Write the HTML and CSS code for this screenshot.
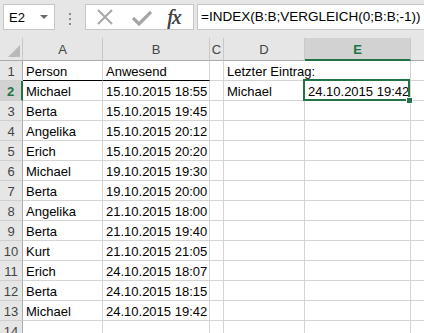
FILE: index.html
```html
<!DOCTYPE html>
<html lang="de">
<head>
    <meta charset="UTF-8">
    <title>Letzter Eintrag</title>
    <link rel="stylesheet" href="styles.css">
</head>
<body>
    <div class="formula-bar">
        <div class="name-box"><span>E2</span><span class="caret"></span></div>
        <div class="grip"><i></i><i></i><i></i></div>
        <div class="fx-buttons">
            <svg class="btn-x" width="18" height="18" viewBox="0 0 18 18"><path d="M2 2 L16 16 M16 2 L2 16" stroke="#a6a6a6" stroke-width="2" fill="none"/></svg>
            <svg class="btn-ok" width="20" height="16" viewBox="0 0 20 16"><path d="M1 8 L7 14 L19 2" stroke="#a6a6a6" stroke-width="3.2" fill="none"/></svg>
            <span class="fx">fx</span>
        </div>
        <div class="formula-input">=INDEX(B:B;VERGLEICH(0;B:B;-1))</div>
    </div>

    <table class="sheet">
        <colgroup>
            <col style="width:23px">
            <col style="width:80px">
            <col style="width:107px">
            <col style="width:14px">
            <col style="width:81px">
            <col style="width:106px">
            <col style="width:40px">
        </colgroup>
        <thead>
            <tr>
                <th class="corner"><span class="tri"></span></th>
                <th>A</th><th>B</th><th>C</th><th>D</th><th class="active">E</th><th></th>
            </tr>
        </thead>
        <tbody>
            <tr><th>1</th><td class="head">Person</td><td class="head">Anwesend</td><td></td><td class="spill">Letzter Eintrag:</td><td></td><td></td></tr>
            <tr><th class="active">2</th><td>Michael</td><td class="num">15.10.2015 18:55</td><td></td><td>Michael</td><td class="num sel">24.10.2015 19:42</td><td></td></tr>
            <tr><th>3</th><td>Berta</td><td class="num">15.10.2015 19:45</td><td></td><td></td><td></td><td></td></tr>
            <tr><th>4</th><td>Angelika</td><td class="num">15.10.2015 20:12</td><td></td><td></td><td></td><td></td></tr>
            <tr><th>5</th><td>Erich</td><td class="num">15.10.2015 20:20</td><td></td><td></td><td></td><td></td></tr>
            <tr><th>6</th><td>Michael</td><td class="num">19.10.2015 19:30</td><td></td><td></td><td></td><td></td></tr>
            <tr><th>7</th><td>Berta</td><td class="num">19.10.2015 20:00</td><td></td><td></td><td></td><td></td></tr>
            <tr><th>8</th><td>Angelika</td><td class="num">21.10.2015 18:00</td><td></td><td></td><td></td><td></td></tr>
            <tr><th>9</th><td>Berta</td><td class="num">21.10.2015 19:40</td><td></td><td></td><td></td><td></td></tr>
            <tr><th>10</th><td>Kurt</td><td class="num">21.10.2015 21:05</td><td></td><td></td><td></td><td></td></tr>
            <tr><th>11</th><td>Erich</td><td class="num">24.10.2015 18:07</td><td></td><td></td><td></td><td></td></tr>
            <tr><th>12</th><td>Berta</td><td class="num">24.10.2015 18:15</td><td></td><td></td><td></td><td></td></tr>
            <tr><th>13</th><td>Michael</td><td class="num">24.10.2015 19:42</td><td></td><td></td><td></td><td></td></tr>
            <tr><th>14</th><td></td><td></td><td></td><td></td><td></td><td></td></tr>
        </tbody>
    </table>
</body>
</html>
```

FILE: styles.css
```css
body {
    margin: 0;
    width: 424px;
    height: 333px;
    overflow: hidden;
    background: #fff;
    font-family: "Liberation Sans", Arial, sans-serif;
    font-size: 13px;
    color: #000;
}

/* formula bar */
.formula-bar {
    display: flex;
    align-items: flex-start;
    height: 38px;
    padding: 4px 0 0 3px;
    box-sizing: border-box;
    background: #e6e6e6;
}
.name-box {
    width: 52px;
    height: 26px;
    box-sizing: border-box;
    background: #fff;
    border: 1px solid #c6c6c6;
    display: flex;
    align-items: center;
    justify-content: space-between;
    padding: 0 6px 0 5px;
}
.caret {
    width: 0;
    height: 0;
    border-left: 4px solid transparent;
    border-right: 4px solid transparent;
    border-top: 4px solid #6a6a6a;
}
.grip {
    display: flex;
    flex-direction: column;
    gap: 3px;
    margin: 9px 0 0 14px;
}
.grip i { display: block; width: 2px; height: 2px; background: #8a8a8a; }
.fx-buttons {
    margin-left: 14px;
    width: 109px;
    height: 26px;
    box-sizing: border-box;
    background: #fff;
    border: 1px solid #c6c6c6;
    display: flex;
    align-items: center;
    padding-left: 10px;
}
.btn-x { margin-right: 18px; }
.btn-ok { margin-right: 15px; margin-top: 2px; }
.fx {
    font-family: "Liberation Serif", "Times New Roman", serif;
    font-style: italic;
    font-size: 21px;
    color: #444;
    letter-spacing: -1px;
    text-shadow: 0.4px 0 0 #444;
}
.formula-input {
    margin-left: 3px;
    flex: 1;
    height: 26px;
    box-sizing: border-box;
    background: #fff;
    border: 1px solid #c6c6c6;
    border-right: none;
    padding: 0 0 0 3px;
    line-height: 24px;
    font-size: 13.5px;
    white-space: nowrap;
    overflow: hidden;
}

/* grid */
.sheet {
    border-collapse: separate;
    border-spacing: 0;
    table-layout: fixed;
    width: 451px;
}
.sheet th, .sheet td {
    box-sizing: border-box;
    height: 20px;
    padding: 0 3px 1px 3px;
    border-right: 1px solid #d4d4d4;
    border-bottom: 1px solid #d4d4d4;
    white-space: nowrap;
    overflow: hidden;
    vertical-align: bottom;
    line-height: 15px;
}
.sheet thead th {
    height: 23px;
    background: #e6e6e6;
    color: #444;
    font-weight: normal;
    text-align: center;
    vertical-align: middle;
    border-right-color: #c8c8c8;
    border-bottom-color: #ababab;
    padding: 1px 0 0 0;
}
.sheet tbody th {
    background: #e6e6e6;
    color: #444;
    font-weight: normal;
    text-align: center;
    padding: 0 0 1px 0;
    border-right-color: #ababab;
    border-bottom-color: #cfcfcf;
}
.sheet thead th.corner {
    text-align: right;
    vertical-align: bottom;
    padding: 0 2px 3px 0;
}
.tri {
    display: inline-block;
    width: 0;
    height: 0;
    border-left: 12px solid transparent;
    border-bottom: 12px solid #b9b9b9;
    vertical-align: bottom;
}
.sheet thead th.active {
    background: #d2d2d2;
    color: #217346;
    font-weight: bold;
    border-bottom: 2px solid #217346;
}
.sheet tbody th.active {
    background: #d2d2d2;
    color: #217346;
    font-weight: bold;
    border-right: 2px solid #217346;
}
.sheet td.head { border-bottom-color: #000; }
.sheet td.spill { overflow: visible; border-right-color: transparent; }
.sheet td.num { text-align: right; padding-right: 3px; }
.sheet td.sel { position: relative; overflow: visible; }
.sheet td.sel::before {
    content: "";
    position: absolute;
    left: -2px;
    top: -2px;
    right: 0;
    bottom: -1px;
    border: 2px solid #217346;
}
.sheet td.sel::after {
    content: "";
    position: absolute;
    right: -3px;
    bottom: -4px;
    width: 5px;
    height: 5px;
    background: #217346;
    border: 1px solid #fff;
}
```
